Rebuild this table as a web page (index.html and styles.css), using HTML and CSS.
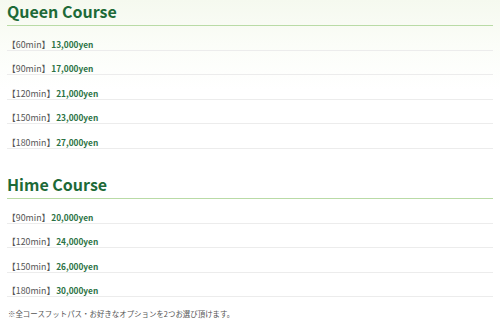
FILE: index.html
```html
<!DOCTYPE html>
<html lang="ja">
<head>
<meta charset="utf-8">
<link rel="stylesheet" href="styles.css">
</head>
<body>
<div class="page">
  <section class="course">
    <h2 class="course-title">Queen Course</h2>
    <ul class="price-list">
      <li class="price-row"><span class="time">【60min】</span><span class="price">13,000yen</span></li>
      <li class="price-row"><span class="time">【90min】</span><span class="price">17,000yen</span></li>
      <li class="price-row"><span class="time">【120min】</span><span class="price">21,000yen</span></li>
      <li class="price-row"><span class="time">【150min】</span><span class="price">23,000yen</span></li>
      <li class="price-row"><span class="time">【180min】</span><span class="price">27,000yen</span></li>
    </ul>
  </section>
  <section class="course">
    <h2 class="course-title">Hime Course</h2>
    <ul class="price-list">
      <li class="price-row"><span class="time">【90min】</span><span class="price">20,000yen</span></li>
      <li class="price-row"><span class="time">【120min】</span><span class="price">24,000yen</span></li>
      <li class="price-row"><span class="time">【150min】</span><span class="price">26,000yen</span></li>
      <li class="price-row"><span class="time">【180min】</span><span class="price">30,000yen</span></li>
    </ul>
  </section>
  <p class="note">※全コースフットパス・お好きなオプションを2つお選び頂けます。</p>
</div>
</body>
</html>
```
FILE: styles.css
```css
html, body {
  margin: 0;
  padding: 0;
}
body {
  width: 500px;
  height: 326px;
  overflow: hidden;
  background: linear-gradient(to bottom, #f5f9ef 0px, #fbfdf8 45px, #ffffff 90px);
  font-family: "Noto Sans CJK JP", "Noto Sans", sans-serif;
}
.page {
  margin: 0 7px;
}
.course + .course {
  margin-top: 24.5px;
}
.course-title {
  margin: 0;
  height: 26px;
  box-sizing: border-box;
  border-bottom: 1px solid #b9dba6;
  font-size: 16px;
  line-height: 22px;
  font-weight: 700;
  color: #1d6a38;
}
.price-list {
  list-style: none;
  margin: 0;
  padding: 0;
}
.price-row {
  display: flex;
  align-items: center;
  height: 24.5px;
  box-sizing: border-box;
  padding-top: 13px;
  border-bottom: 1px solid #ececec;
  font-size: 8.8px;
  line-height: 11px;
}
.time {
  color: #555555;
}
.price {
  color: #2b7244;
  font-weight: 700;
  font-size: 8.3px;
  margin-left: 1px;
}
.note {
  margin: 12px 0 0 1px;
  font-size: 7.45px;
  line-height: 10px;
  color: #555555;
}
```
